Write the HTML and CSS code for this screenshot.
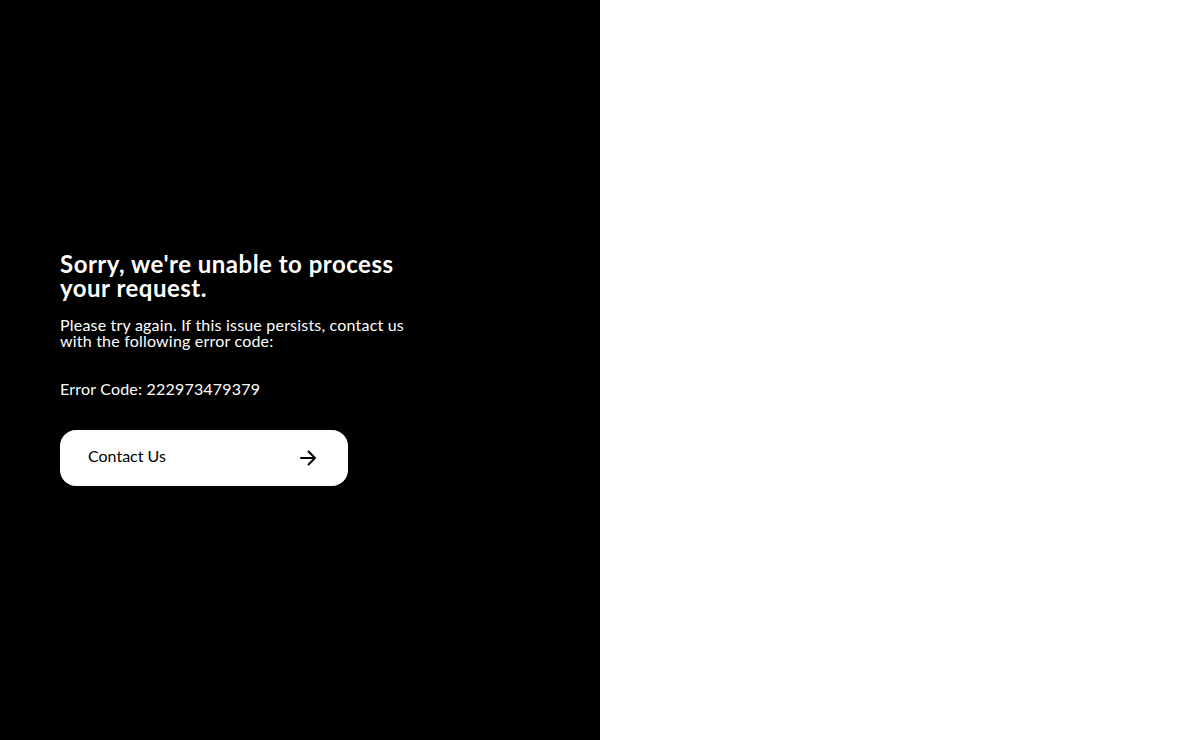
FILE: index.html
```html
<!DOCTYPE html>
<html lang="en">
<head>
<meta charset="utf-8">
<title>Error</title>
<link rel="stylesheet" href="styles.css">
</head>
<body>
<div class="page">
  <main class="panel">
    <div class="content">
      <h1 class="title">Sorry, we're unable to process your request.</h1>
      <p class="message">Please try again. If this issue persists, contact us with the following error code:</p>
      <p class="code">Error Code: 222973479379</p>
      <a class="button" href="#">
        <span class="button-label">Contact Us</span>
        <svg class="arrow" width="20" height="20" viewBox="0 0 20 20" fill="none" stroke="#000" stroke-width="2" stroke-linecap="round" stroke-linejoin="round"><path d="M3 10h14M10.5 3.5 17 10l-6.5 6.5"/></svg>
      </a>
    </div>
  </main>
  <aside class="side"></aside>
</div>
</body>
</html>
```
FILE: styles.css
```css
* { box-sizing: border-box; }
html, body { margin: 0; padding: 0; height: 100%; }
body { font-family: Lato, "Noto Sans", sans-serif; background: #fff; }
.page { display: flex; height: 740px; }
.panel {
  width: 600px;
  background: #000;
  color: #fff;
  display: flex;
  align-items: center;
  padding-left: 60px;
  padding-bottom: 2px;
}
.content { width: 370px; }
.title {
  margin: 0;
  font-size: 24px;
  line-height: 24px;
  font-weight: 700;
  letter-spacing: 0.5px;
}
.message {
  margin: 17px 0 0;
  font-size: 16px;
  line-height: 16px;
  letter-spacing: 0.2px;
}
.code {
  margin: 32px 0 0;
  font-size: 16px;
  line-height: 16px;
  letter-spacing: 0.2px;
}
.button {
  margin-top: 33px;
  width: 288px;
  height: 56px;
  background: #fff;
  border-radius: 16px;
  display: flex;
  align-items: center;
  justify-content: space-between;
  padding: 0 30px 0 28px;
  color: #000;
  text-decoration: none;
  font-size: 16px;
}
.button-label { padding-bottom: 5px; }
.arrow { display: block; }
.side { flex: 1; background: #fff; }
```
